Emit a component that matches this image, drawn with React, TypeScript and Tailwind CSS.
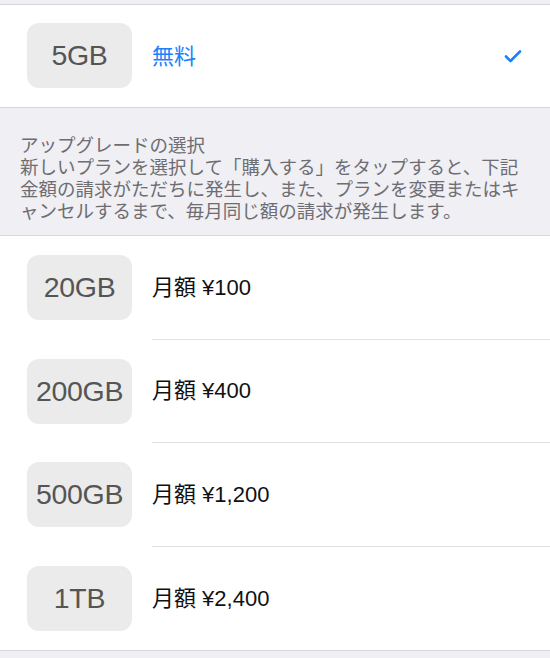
import React from 'react';

const plans = [
  { size: '20GB', price: '月額 ¥100' },
  { size: '200GB', price: '月額 ¥400' },
  { size: '500GB', price: '月額 ¥1,200' },
  { size: '1TB', price: '月額 ¥2,400' },
];

function Badge({ label }: { label: string }) {
  return (
    <div className="w-[105px] h-[65px] rounded-[12px] bg-[#ebebeb] flex items-center justify-center text-[28.5px] text-[#555555] tracking-[-0.3px]">
      {label}
    </div>
  );
}

export default function App() {
  return (
    <div
      className="min-h-screen bg-[#efeff4]"
      style={{ fontFamily: '"Liberation Sans", "Noto Sans CJK JP", sans-serif' }}
    >
      <div className="h-[4px]" />

      {/* current plan */}
      <div className="bg-white border-y border-[#d8d8dc] flex items-stretch">
        <div className="pl-[27px] pr-[20px] pt-[18px] pb-[19px]">
          <Badge label="5GB" />
        </div>
        <div className="flex-1 flex items-center justify-between pr-[28px]">
          <span className="text-[22px] text-[#1a82fb]">無料</span>
          <svg width="18" height="14" viewBox="0 0 18 14" fill="none">
            <path d="M2 7.5 L6.5 12 L16 2.5" stroke="#1a82fb" strokeWidth="2.6" strokeLinecap="round" strokeLinejoin="round" />
          </svg>
        </div>
      </div>

      {/* header */}
      <div className="px-[20px] pt-[27px] pb-[12px] text-[18.5px] leading-[22px] text-[#6d6d72]">
        <p>アップグレードの選択</p>
        <p>新しいプランを選択して「購入する」をタップすると、下記金額の請求がただちに発生し、また、プランを変更またはキャンセルするまで、毎月同じ額の請求が発生します。</p>
      </div>

      {/* plans */}
      <div className="bg-white border-y border-[#d8d8dc]">
        {plans.map((p, i) => (
          <div key={p.size} className="flex items-stretch">
            <div className="pl-[27px] pr-[20px] pt-[19px] pb-[19.5px]">
              <Badge label={p.size} />
            </div>
            <div
              className={
                'flex-1 flex items-center text-[22px] text-[#111111] ' +
                (i < plans.length - 1 ? 'border-b border-[#e2e2e6]' : '')
              }
            >
              {p.price}
            </div>
          </div>
        ))}
      </div>
    </div>
  );
}
